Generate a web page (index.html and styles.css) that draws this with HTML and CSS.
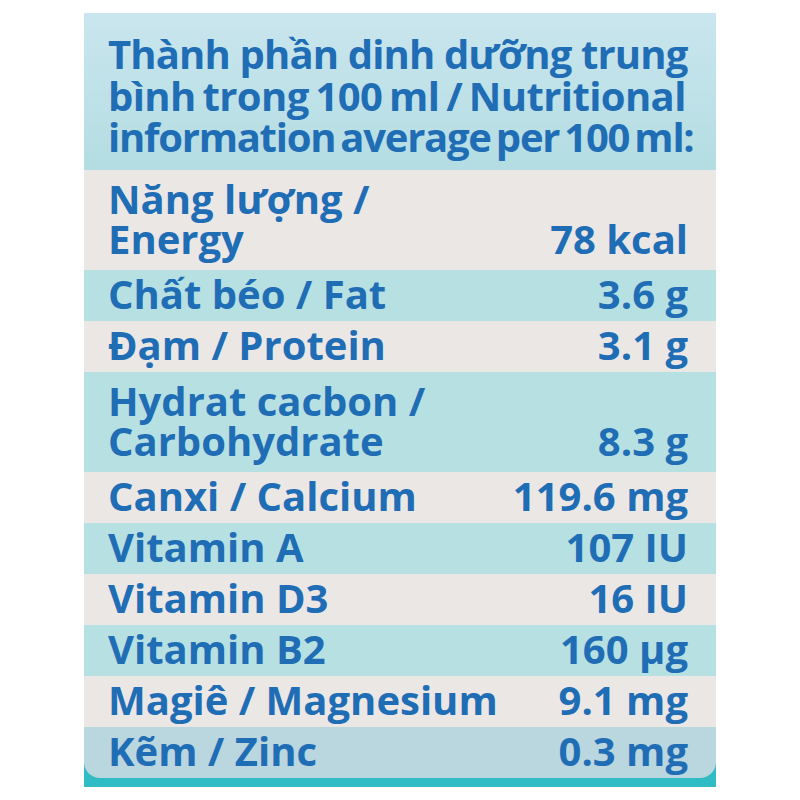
FILE: index.html
```html
<!DOCTYPE html>
<html lang="vi">
<head>
<meta charset="utf-8">
<title>Nutrition</title>
<link rel="stylesheet" href="styles.css">
</head>
<body>
<div class="label">
  <div class="head">
    <div class="hl l1">Thành phần dinh dưỡng trung</div>
    <div class="hl l2">bình trong 100 ml / Nutritional</div>
    <div class="hl l3">information average per 100 ml:</div>
  </div>
  <div class="row grey two"><span class="name">Năng lượng /<br>Energy</span><span class="val">78 kcal</span></div>
  <div class="row cyan"><span class="name">Chất béo / Fat</span><span class="val">3.6 g</span></div>
  <div class="row grey"><span class="name">Đạm / Protein</span><span class="val">3.1 g</span></div>
  <div class="row cyan two"><span class="name">Hydrat cacbon /<br>Carbohydrate</span><span class="val">8.3 g</span></div>
  <div class="row grey"><span class="name">Canxi / Calcium</span><span class="val">119.6 mg</span></div>
  <div class="row cyan"><span class="name">Vitamin A</span><span class="val">107 IU</span></div>
  <div class="row grey"><span class="name">Vitamin D3</span><span class="val">16 IU</span></div>
  <div class="row cyan"><span class="name">Vitamin B2</span><span class="val">160 µg</span></div>
  <div class="row grey"><span class="name">Magiê / Magnesium</span><span class="val">9.1 mg</span></div>
  <div class="row last"><span class="name">Kẽm / Zinc</span><span class="val">0.3 mg</span></div>
</div>
</body>
</html>
```
FILE: styles.css
```css
html, body { margin: 0; padding: 0; background: #ffffff; }
body { padding: 13px 0 0 84px; width: 800px; height: 800px; box-sizing: border-box; }
.label {
  width: 632px;
  background: linear-gradient(180deg, #5cc9cf, #2fbcc4);
  padding-bottom: 9px;
  font-family: "Open Sans", "Noto Sans", sans-serif;
  font-weight: 700;
  color: #1f6db5;
}
.head {
  background: linear-gradient(180deg, #cae5ed 0%, #c0e2e9 45%, #b3dde2 100%);
  padding: 20px 20px 0 24px;
  height: 137px;
  font-size: 40px;
  line-height: 41.5px;
  white-space: nowrap;
}
.l1 { letter-spacing: -0.85px; }
.l2 { letter-spacing: -0.6px; word-spacing: -3px; }
.l3 { letter-spacing: -1.25px; word-spacing: -4px; }
.row {
  display: flex;
  justify-content: space-between;
  align-items: flex-end;
  padding: 4px 28px 7px 24px;
  font-size: 40px;
  line-height: 40px;
  white-space: nowrap;
}
.row.two { padding-top: 9px; padding-bottom: 11px; }
.grey { background: #ebe7e5; }
.cyan { background: #b7e0e2; }
.last { background: #bad6de; border-radius: 0 0 16px 16px; }
.val { text-align: right; }
```
